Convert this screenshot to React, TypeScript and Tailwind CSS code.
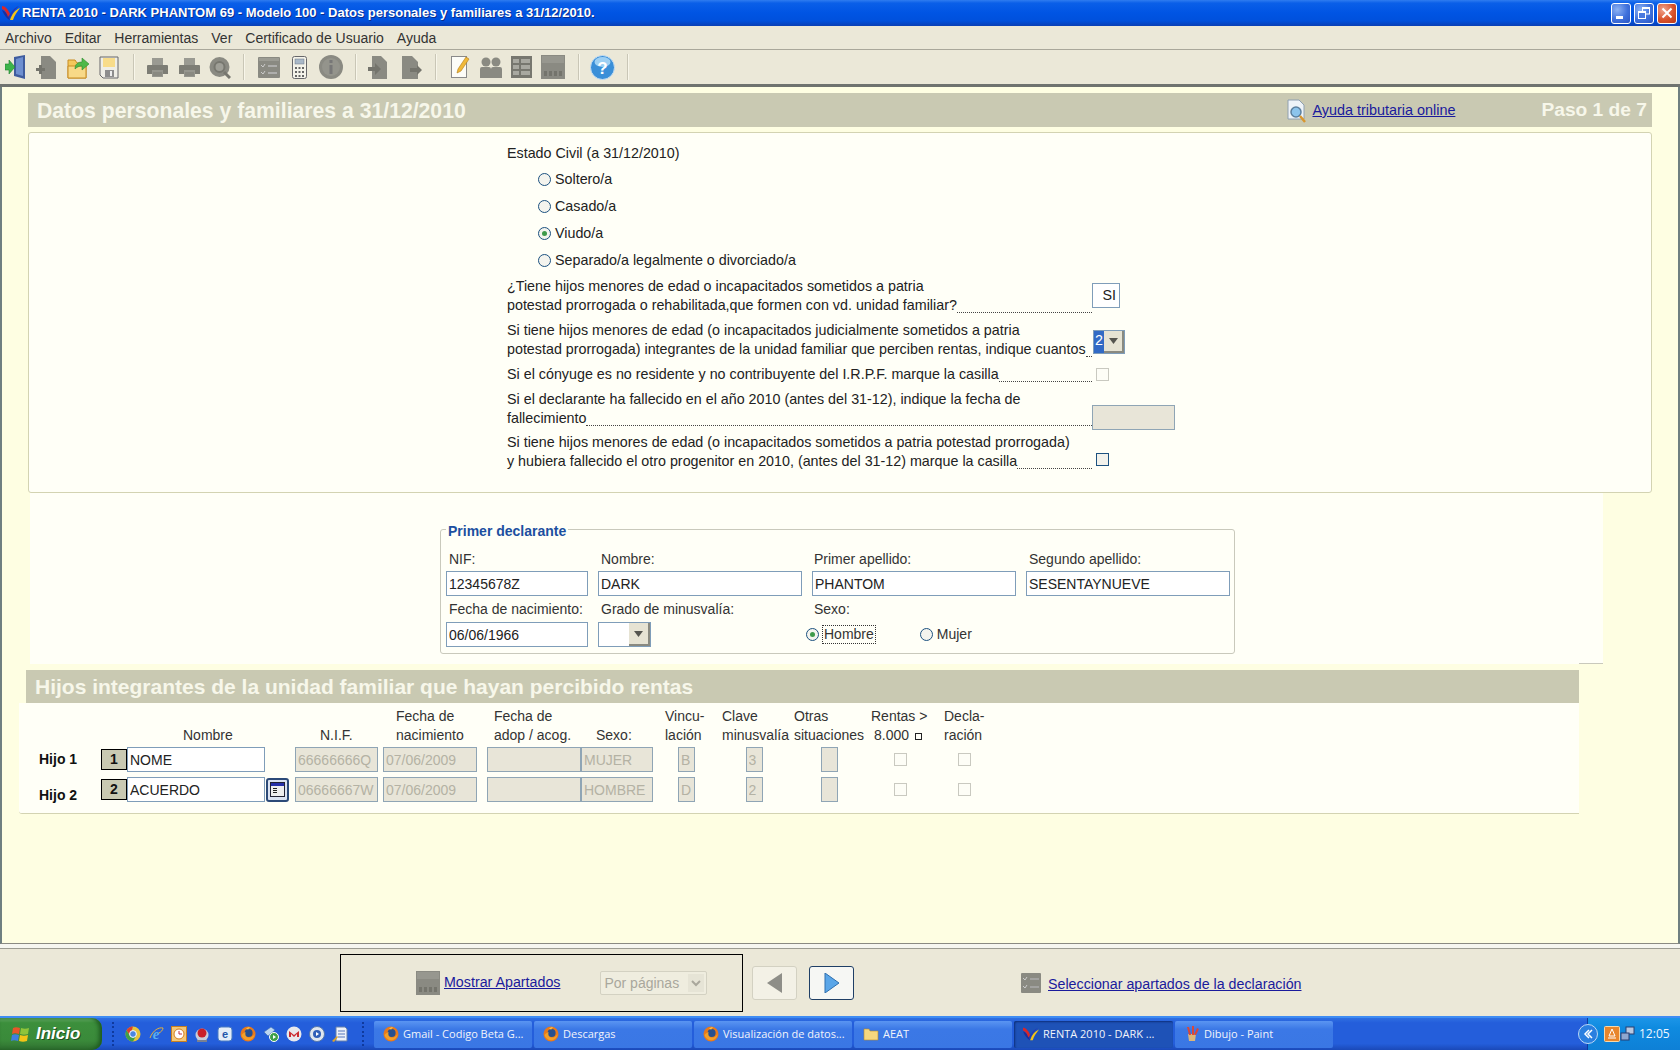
import React from "react";

const G = "#8a8a82";
const CHILD_COLS = "grid grid-cols-[62px_26px_138px_30px_88px_104px_94px_72px_67px_68px_82px_60px_68px]";

function Radio({ checked = false }: { checked?: boolean }) {
  return (
    <span className="-mt-[1px] flex h-[13px] w-[13px] shrink-0 items-center justify-center rounded-full border border-[#1c5180] bg-[#f4f4ee]">
      {checked && <span className="h-[5px] w-[5px] rounded-full bg-[#3f9a4a]" />}
    </span>
  );
}

function Leader() {
  return <span className="mb-[2px] h-[1px] min-w-0 flex-1 self-end border-b border-dotted border-[#444]" />;
}

function Arrow() {
  return (
    <span className="flex h-full w-[21px] items-center justify-center border-b-2 border-r-2 border-[#8a8a80] bg-[#e6e3d3]">
      <svg width="9" height="6" viewBox="0 0 9 6"><path d="M0 0h9L4.5 6z" fill="#55554f" /></svg>
    </span>
  );
}

function TextInput({ value, className }: { value: string; className: string }) {
  return (
    <input
      readOnly
      value={value}
      className={`h-[25px] border border-[#7f9db9] bg-white px-[2px] text-[14px] text-[#222] outline-none ${className}`}
    />
  );
}

function Disabled({ value = "", className }: { value?: string; className: string }) {
  return (
    <input
      readOnly
      value={value}
      className={`h-[25px] border border-[#8fa5b5] bg-[#e8e5d8] px-[2px] text-[14px] text-[#b4b2a4] outline-none ${className}`}
    />
  );
}

function DisabledCheck() {
  return <span className="block h-[13px] w-[13px] border border-[#c9c9c0] bg-[#fdfdf6]" />;
}

function Sep({ className }: { className: string }) {
  return <span className={`h-[26px] w-[2px] shrink-0 border-l border-r border-l-[#c9c6b6] border-r-[#f8f6ea] ${className}`} />;
}

function Firefox() {
  return (
    <svg width="16" height="16" viewBox="0 0 16 16" className="shrink-0">
      <circle cx="8" cy="8" r="7.5" fill="#e8791c" />
      <circle cx="8.6" cy="7" r="4" fill="#27508f" />
      <path d="M1.5 9c1 4 5 6 8.500 5 3-1 4.500-3.500 4.500-6-1.500 3-4.500 4-6.500 3.500C5.500 11 5 9 5.500 6 4 6.500 2.500 7.500 1.500 9z" fill="#f2a02a" />
      <path d="M6 3c1-1.500 3-2 4-1.500-1 .5-1.500 1-1.500 2z" fill="#f6c14a" />
    </svg>
  );
}

function AeatLogo({ size = 18 }: { size?: number }) {
  return (
    <svg width={size} height={size} viewBox="0 0 18 18" className="shrink-0">
      <path d="M0 6c3 1 6 4 8 10C5 15 2 11 0 6z" fill="#1d2f9c" />
      <path d="M0 2c3 0 6 3 8 8l-2 3C5 9 3 6 0 5z" fill="#d9262a" />
      <path d="M8 16c2-6 5-10 10-12-3 4-6 8-7 12z" fill="#f3c417" />
      <path d="M6.500 14C9 8 12 4 17 2c-4 3-7 7-9 12z" fill="#2336b5" />
    </svg>
  );
}

function TaskButton({ icon, label, className }: { icon: React.ReactNode; label: string; className: string }) {
  return (
    <div className={`flex h-[27px] shrink-0 items-center gap-[4px] rounded-[2px] pl-[9px] text-[11px] text-[#f2f4fb] ${className}`}>
      {icon}
      <span className="whitespace-nowrap">{label}</span>
    </div>
  );
}

function WinButton({ kind }: { kind: "min" | "max" | "close" }) {
  const bg =
    kind === "close"
      ? "bg-[radial-gradient(circle_at_30%_30%,#f0a58e,#d9532c_55%,#b83a18)]"
      : "bg-[radial-gradient(circle_at_30%_30%,#8db2f3,#3f71dc_55%,#2a55c4)]";
  return (
    <div className={`flex h-[21px] w-[20px] items-center justify-center rounded-[3px] border border-white ${bg}`}>
      <svg width="14" height="14" viewBox="0 0 14 14">
        {kind === "min" && <rect x="2" y="10" width="7" height="3" fill="#fff" />}
        {kind === "max" && (
          <g fill="none" stroke="#fff">
            <rect x="5.500" y="1.500" width="7" height="6.500" />
            <rect x="1.500" y="5.500" width="7" height="7" fill="#4a79df" />
            <path d="M5.500 2.500h7M1.500 6.500h7" />
          </g>
        )}
        {kind === "close" && <path d="M2.500 2.500l9 9M11.500 2.500l-9 9" stroke="#fff" strokeWidth="2" />}
      </svg>
    </div>
  );
}

function TitleBar() {
  return (
    <div className="flex h-[26px] shrink-0 items-center bg-[linear-gradient(180deg,#2f7cf0_0%,#0a5fe8_12%,#0054e3_50%,#0050dc_80%,#0a3fb4_100%)] pl-[2px] pr-[3px]">
      <AeatLogo size={18} />
      <span className="ml-[2px] flex-1 whitespace-nowrap font-['Liberation_Sans'] text-[13px] font-bold text-white [text-shadow:1px_1px_#0a2d8c]">
        RENTA 2010 - DARK PHANTOM 69 - Modelo 100 - Datos personales y familiares a 31/12/2010.
      </span>
      <div className="flex gap-[3px]">
        <WinButton kind="min" />
        <WinButton kind="max" />
        <WinButton kind="close" />
      </div>
    </div>
  );
}

function MenuBar() {
  return (
    <div className="flex h-[24px] shrink-0 items-center gap-[13px] border-b border-[#a9a79a] bg-[#ebe8d8] pl-[5px] pt-[1px] text-[14px] text-[#333]">
      <span>Archivo</span>
      <span>Editar</span>
      <span>Herramientas</span>
      <span>Ver</span>
      <span>Certificado de Usuario</span>
      <span>Ayuda</span>
    </div>
  );
}

function PrinterIcon({ className }: { className: string }) {
  return (
    <svg width="21" height="23" viewBox="0 0 21 23" className={`shrink-0 ${className}`}>
      <path d="M5 2h11v7H5z" fill="#9a9a92" />
      <path d="M1 9h19q1 0 1 1v8H0v-8q0-1 1-1z" fill="#7d7d75" />
      <path d="M5 14h11v7H5z" fill="#96968e" />
      <path d="M6 17h9M6 19h9" stroke="#7d7d75" />
    </svg>
  );
}

function Toolbar() {
  return (
    <div className="flex h-[37px] shrink-0 items-center border-b-[3px] border-[#6f736f] bg-[#ebe8d8] pl-[5px]">
      <svg width="22" height="24" viewBox="0 0 22 24" className="shrink-0">
        <path d="M9 2l11-2v24l-11-3z" fill="#3f5c9e" />
        <path d="M11 4l7-2v19l-7-2z" fill="#6e8fd0" />
        <path d="M0 9h4V5l6 7-6 7v-4H0z" fill="#3cb44a" stroke="#1f7f2c" strokeWidth=".6" />
      </svg>
      <svg width="20" height="23" viewBox="0 0 20 23" className="ml-[9px] shrink-0">
        <path d="M5 0h9l6 6v17H5z" fill={G} />
        <path d="M3 9h3v3h3v3H6v3H3v-3H0v-3h3z" fill="#74746c" />
      </svg>
      <svg width="23" height="23" viewBox="0 0 23 23" className="ml-[11px] shrink-0">
        <path d="M1 4h7l2 3h9v15H1z" fill="#f3c85c" stroke="#c88c22" />
        <path d="M1 10h18v12H1z" fill="#f8d987" stroke="#c88c22" />
        <path d="M8 13C8 8 11 6 15 6V2l7 6-7 6v-4c-3 0-5 1-7 3z" fill="#4fb848" stroke="#2a8a2e" strokeWidth=".6" />
      </svg>
      <svg width="20" height="23" viewBox="0 0 20 23" className="ml-[9px] shrink-0">
        <path d="M1 1h18v21H4l-3-3z" fill="#efeee6" stroke="#67676a" />
        <rect x="4" y="2" width="12" height="9" fill="#f8dc8a" />
        <rect x="6" y="14" width="9" height="7" fill="#8d8d8d" />
        <rect x="11" y="15" width="2" height="5" fill="#eee" />
      </svg>
      <Sep className="ml-[14px]" />
      <PrinterIcon className="ml-[12px]" />
      <PrinterIcon className="ml-[11px]" />
      <svg width="22" height="23" viewBox="0 0 22 23" className="ml-[9px] shrink-0">
        <circle cx="10.500" cy="11" r="10" fill={G} />
        <circle cx="10.500" cy="11" r="5" fill="#9f9f97" stroke="#77776f" strokeWidth="2" />
        <path d="M15 16l6 6" stroke="#77776f" strokeWidth="3" />
      </svg>
      <Sep className="ml-[12px]" />
      <svg width="22" height="23" viewBox="0 0 22 23" className="ml-[13px] shrink-0">
        <rect x="0" y="1" width="22" height="21" rx="1" fill={G} />
        <rect x="1" y="2" width="20" height="3" fill="#9c9c94" />
        <path d="M3 9l2 2 2-3M3 16l2 2 2-3" stroke="#ccc" fill="none" />
        <path d="M10 10h9M10 17h9" stroke="#bbb" strokeWidth="1.500" />
      </svg>
      <svg width="15" height="23" viewBox="0 0 15 23" className="ml-[12px] shrink-0">
        <rect x=".5" y=".5" width="14" height="22" rx="2" fill="#f4f3ea" stroke="#67676a" />
        <rect x="3" y="3" width="9" height="5" fill="#a9b8c8" stroke="#6a7684" strokeWidth=".5" />
        <path d="M3 11h2v2H3zM6.500 11h2v2h-2zM10 11h2v2h-2zM3 15h2v2H3zM6.500 15h2v2h-2zM10 15h2v2h-2zM3 19h2v2H3zM6.500 19h2v2h-2zM10 19h2v2h-2z" fill="#666" />
      </svg>
      <svg width="24" height="24" viewBox="0 0 24 24" className="ml-[12px] shrink-0">
        <circle cx="12" cy="12" r="12" fill={G} />
        <circle cx="12" cy="12" r="9" fill="#94948c" />
        <rect x="10.500" y="10" width="3" height="9" fill="#777" />
        <rect x="10.500" y="5" width="3" height="3" fill="#777" />
      </svg>
      <Sep className="ml-[12px]" />
      <svg width="20" height="23" viewBox="0 0 20 23" className="ml-[11px] shrink-0">
        <path d="M4 0h9l6 6v17H4z" fill={G} />
        <path d="M0 11h7V7l6 6-6 6v-4H0z" fill="#74746c" />
      </svg>
      <svg width="20" height="23" viewBox="0 0 20 23" className="ml-[14px] shrink-0">
        <path d="M0 0h10l6 6v17H0z" fill={G} />
        <path d="M8 12h7V9l5 5-5 5v-3H8z" fill="#74746c" />
      </svg>
      <Sep className="ml-[13px]" />
      <svg width="19" height="24" viewBox="0 0 19 24" className="ml-[14px] shrink-0">
        <rect x=".5" y="1.500" width="15" height="21" fill="#fdfdf8" stroke="#8a8a8a" />
        <path d="M7 14L15 2l3 2-8 12-4 2z" fill="#f0b93a" stroke="#b27a12" strokeWidth=".6" />
      </svg>
      <svg width="22" height="23" viewBox="0 0 22 23" className="ml-[10px] shrink-0">
        <circle cx="6" cy="6" r="4.500" fill={G} />
        <circle cx="16" cy="6" r="4.500" fill={G} />
        <path d="M0 22V13q0-2 2-2h7q2 0 2 2 0-2 2-2h7q2 0 2 2v9z" fill={G} />
      </svg>
      <svg width="21" height="23" viewBox="0 0 21 23" className="ml-[9px] shrink-0">
        <rect width="21" height="22" fill="#77776f" />
        <path d="M2 3h6v4H2zM10 3h9v4h-9zM2 9h6v4H2zM10 9h9v4h-9zM2 15h6v4H2zM10 15h9v4h-9z" fill="#a8a8a0" />
      </svg>
      <svg width="24" height="24" viewBox="0 0 24 24" className="ml-[9px] shrink-0">
        <rect width="24" height="24" fill={G} />
        <rect x="1" y="1" width="22" height="7" fill="#97978f" />
        <path d="M3 16h3v5H3zM8 16h3v5H8zM13 16h3v5h-3zM18 16h3v5h-3z" fill="#74746c" />
      </svg>
      <Sep className="ml-[13px]" />
      <svg width="25" height="25" viewBox="0 0 25 25" className="ml-[10px] shrink-0">
        <circle cx="12.500" cy="12.500" r="12" fill="#3a8fd8" stroke="#c8dff2" />
        <ellipse cx="12.500" cy="7" rx="8" ry="5" fill="#9ed0f3" />
        <text x="12.500" y="19" textAnchor="middle" fontSize="17" fontWeight="700" fontFamily="Liberation Sans" fill="#fff">?</text>
      </svg>
      <Sep className="ml-[12px]" />
    </div>
  );
}

function Question({
  first,
  second,
  control,
  heightClass,
  className,
}: {
  first?: string;
  second: string;
  control: React.ReactNode;
  heightClass: string;
  className: string;
}) {
  return (
    <div className={`flex ${heightClass} ${className}`}>
      <div className="flex w-[585px] shrink-0 flex-col justify-start">
        {first && <div className="whitespace-nowrap">{first}</div>}
        <div className="flex whitespace-nowrap">
          <span>{second}</span>
          <Leader />
        </div>
      </div>
      {control}
    </div>
  );
}

function PersonalPanel() {
  return (
    <section className="ml-[26px] w-[1624px]">
      <div className="flex h-[34px] items-center bg-[#c9c9b2] pr-[5px]">
        <span className="ml-[9px] mt-[2px] text-[21.2px] font-bold text-[#f7f7ea]">Datos personales y familiares a 31/12/2010</span>
        <svg width="20" height="24" viewBox="0 0 20 24" className="ml-auto mt-[1px] shrink-0">
          <path d="M1 1h11l5 5v14H1z" fill="#eef3f8" stroke="#8fa0b0" />
          <circle cx="9" cy="13" r="5" fill="#8cc4ec" stroke="#5b7f9e" strokeWidth="1.500" />
          <path d="M13 17l5 6" stroke="#d8962e" strokeWidth="2.500" />
        </svg>
        <span className="ml-[5px] mt-[1px] text-[14.4px] text-[#1a1a9c] underline">Ayuda tributaria online</span>
        <span className="ml-[86px] text-[19.2px] font-bold text-[#f7f7ea]">Paso 1 de 7</span>
      </div>
      <div className="mt-[5px] h-[361px] rounded-[3px] border border-[#d3d3b2] bg-[#fffff7] pl-[478px] pt-[11px] text-[14.3px] leading-[19px] text-[#222]">
        <div>Estado Civil (a 31/12/2010)</div>
        <div className="mt-[3px] flex flex-col pl-[31px]">
          <div className="flex h-[27px] items-center gap-[4px]"><Radio />Soltero/a</div>
          <div className="flex h-[27px] items-center gap-[4px]"><Radio />Casado/a</div>
          <div className="flex h-[27px] items-center gap-[4px]"><Radio checked />Viudo/a</div>
          <div className="flex h-[27px] items-center gap-[4px]"><Radio />Separado/a legalmente o divorciado/a</div>
        </div>
        <Question
          className="mt-[3px]"
          heightClass="h-[38px]"
          first="¿Tiene hijos menores de edad o incapacitados sometidos a patria"
          second="potestad prorrogada o rehabilitada,que formen con vd. unidad familiar?"
          control={
            <div className="mt-[6px] flex h-[25px] w-[28px] items-center justify-end border border-[#7f9db9] bg-white pr-[3px]">SI</div>
          }
        />
        <Question
          className="mt-[6px]"
          heightClass="h-[38px]"
          first="Si tiene hijos menores de edad (o incapacitados judicialmente sometidos a patria"
          second="potestad prorrogada) integrantes de la unidad familiar que perciben rentas, indique cuantos"
          control={
            <div className="ml-[1px] mt-[9px] flex h-[24px] w-[32px] border border-[#7f9db9] bg-white">
              <span className="w-[11px] bg-[#316ac5] pl-[1px] text-white">2</span>
              <Arrow />
            </div>
          }
        />
        <Question
          className="mt-[6px]"
          heightClass="h-[19px]"
          second="Si el cónyuge es no residente y no contribuyente del I.R.P.F. marque la casilla"
          control={<div className="ml-[4px] mt-[3px]"><DisabledCheck /></div>}
        />
        <Question
          className="mt-[6px]"
          heightClass="h-[38px]"
          first="Si el declarante ha fallecido en el año 2010 (antes del 31-12), indique la fecha de"
          second="fallecimiento"
          control={<div className="mt-[15px] h-[25px] w-[83px] shrink-0 border border-[#8fa5b5] bg-[#e8e5d8]" />}
        />
        <Question
          className="mt-[5px]"
          heightClass="h-[38px]"
          first="Si tiene hijos menores de edad (o incapacitados sometidos a patria potestad prorrogada)"
          second="y hubiera fallecido el otro progenitor en 2010, (antes del 31-12) marque la casilla"
          control={<div className="ml-[4px] mt-[20px] h-[13px] w-[13px] border border-[#1c5180] bg-[#f2f2ec]" />}
        />
      </div>
    </section>
  );
}

function Declarante() {
  return (
    <section className="ml-[28px] h-[171px] w-[1573px] bg-[#fffff7] pt-[26px] text-[14px] text-[#333]">
      <fieldset className="ml-[410px] h-[135px] w-[795px] rounded-[3px] border border-[#c9c9bc] pl-[5px]">
        <legend className="px-[2px] pt-[4px] font-bold leading-[17px] text-[#1c4fa0]">Primer declarante</legend>
        <div className="mt-[8px] grid grid-cols-[142px_204px_204px_204px] gap-x-[10px]">
          <div className="flex h-[23px] items-center pl-[3px]">NIF:</div>
          <div className="flex h-[23px] items-center pl-[3px]">Nombre:</div>
          <div className="flex h-[23px] items-center pl-[2px]">Primer apellido:</div>
          <div className="flex h-[23px] items-center pl-[3px]">Segundo apellido:</div>
          <TextInput value="12345678Z" className="w-full" />
          <TextInput value="DARK" className="w-full" />
          <TextInput value="PHANTOM" className="w-full" />
          <TextInput value="SESENTAYNUEVE" className="w-full" />
          <div className="flex h-[26px] items-center whitespace-nowrap pl-[3px]">Fecha de nacimiento:</div>
          <div className="flex h-[26px] items-center pl-[3px]">Grado de minusvalía:</div>
          <div className="col-span-2 flex h-[26px] items-center pl-[2px]">Sexo:</div>
          <TextInput value="06/06/1966" className="w-full" />
          <div className="flex h-[25px] w-[53px] border border-[#7f9db9] bg-white">
            <span className="flex-1" />
            <Arrow />
          </div>
          <div className="col-span-2 -ml-[6px] flex h-[25px] items-center">
            <Radio checked />
            <span className="ml-[3px] flex h-[19px] items-center border border-dotted border-[#333] px-[1px]">Hombre</span>
            <span className="ml-[44px]"><Radio /></span>
            <span className="ml-[4px]">Mujer</span>
          </div>
        </div>
      </fieldset>
      <div className="ml-[1549px] mt-[9px] h-[1px] w-[24px] bg-[#c9c9bc]" />
    </section>
  );
}

function ChildRow({
  label,
  labelClass,
  n,
  name,
  nif,
  sex,
  vinc,
  clave,
  active,
}: {
  label: string;
  labelClass: string;
  n: string;
  name: string;
  nif: string;
  sex: string;
  vinc: string;
  clave: string;
  active?: boolean;
}) {
  return (
    <>
      <div className={`font-bold text-[#111] ${labelClass}`}>{label}</div>
      <div className="flex h-[21px] items-center justify-center self-center border border-black bg-[#c9c9b2] font-bold text-[#111]">{n}</div>
      <TextInput value={name} className="w-[138px]" />
      <div className="flex h-[25px] items-center pl-[1px]">
        {active && (
          <span className="flex h-[24px] w-[23px] items-center justify-center rounded-[3px] border-2 border-[#2c4a78] bg-[#dbe3f2]">
            <svg width="15" height="15" viewBox="0 0 15 15">
              <rect x=".5" y=".5" width="14" height="14" fill="#eee" stroke="#223" />
              <rect x="1" y="1" width="13" height="3" fill="#2630a8" />
              <path d="M3 6h4v1H3zM3 8h4v1H3zM3 10h4v1H3z" fill="#222" />
            </svg>
          </span>
        )}
      </div>
      <div><Disabled value={nif} className="w-[83px]" /></div>
      <div><Disabled value="07/06/2009" className="w-[94px]" /></div>
      <Disabled className="w-[94px]" />
      <Disabled value={sex} className="w-[72px]" />
      <div className="flex justify-center"><Disabled value={vinc} className="w-[17px] px-[1px]" /></div>
      <div className="flex justify-center"><Disabled value={clave} className="w-[17px] px-[1px]" /></div>
      <div className="flex justify-center"><Disabled className="w-[17px]" /></div>
      <div className="flex items-center justify-center"><DisabledCheck /></div>
      <div className="flex items-center justify-center"><DisabledCheck /></div>
    </>
  );
}

function Children() {
  return (
    <section className="mt-[6px] text-[14px] leading-[19px] text-[#333]">
      <div className="ml-[24px] flex h-[33px] w-[1553px] items-center bg-[#c9c9b2] pl-[9px] text-[21px] font-bold text-[#f7f7ea]">
        Hijos integrantes de la unidad familiar que hayan percibido rentas
      </div>
      <div className="ml-[17px] h-[111px] w-[1560px] rounded-bl-[3px] border-b border-[#d3d3b2] bg-[#fffff7] pl-[20px] pt-[4px]">
        <div className={CHILD_COLS}>
          <div className="col-span-2" />
          <div className="self-end pl-[56px]">Nombre</div>
          <div />
          <div className="self-end pl-[25px]">N.I.F.</div>
          <div className="pl-[13px]">Fecha de<br />nacimiento</div>
          <div className="pl-[7px]">Fecha de<br />adop / acog.</div>
          <div className="self-end pl-[15px]">Sexo:</div>
          <div className="pl-[12px]">Vincu-<br />lación</div>
          <div className="pl-[2px]">Clave<br />minusvalía</div>
          <div className="pl-[6px]">Otras<br />situaciones</div>
          <div className="pl-[1px]">
            Rentas &gt;
            <br />
            <span className="ml-[3px]">8.000</span>
            <span className="ml-[6px] inline-block h-[7px] w-[7px] border border-[#222]" />
          </div>
          <div className="pl-[14px]">Decla-<br />ración</div>
        </div>
        <div className={`${CHILD_COLS} mt-[2px] gap-y-[5px]`}>
          <ChildRow label="Hijo 1" labelClass="self-center" n="1" name="NOME" nif="66666666Q" sex="MUJER" vinc="B" clave="3" />
          <ChildRow label="Hijo 2" labelClass="self-end -mb-[3px]" n="2" name="ACUERDO" nif="06666667W" sex="HOMBRE" vinc="D" clave="2" active />
        </div>
      </div>
    </section>
  );
}

function BottomBar() {
  return (
    <div className="flex h-[67px] shrink-0 items-start bg-[#ebe8d8] pl-[340px] pt-[5px] text-[14.25px]">
      <div className="flex h-[58px] w-[403px] shrink-0 items-center border border-black pl-[75px]">
        <svg width="24" height="24" viewBox="0 0 24 24" className="shrink-0">
          <rect width="24" height="24" fill={G} />
          <rect x="1" y="1" width="22" height="7" fill="#97978f" />
          <path d="M3 16h3v5H3zM8 16h3v5H8zM13 16h3v5h-3zM18 16h3v5h-3z" fill="#74746c" />
        </svg>
        <span className="ml-[4px] text-[#1a1a9c] underline">Mostrar Apartados</span>
        <div className="ml-[40px] flex h-[24px] w-[107px] items-center justify-between rounded-[2px] border border-[#d3d1c2] bg-[#efeddf] pl-[3px] pr-[2px] text-[14px] text-[#a9a79c]">
          <span>Por páginas</span>
          <svg width="16" height="18" viewBox="0 0 16 18"><rect width="16" height="18" fill="#e6e4d6" /><path d="M4 7l4 4 4-4" fill="none" stroke="#a9a79c" strokeWidth="2" /></svg>
        </div>
      </div>
      <div className="ml-[9px] mt-[12px] flex h-[34px] w-[45px] shrink-0 items-center justify-center rounded-[3px] border border-[#d3d1c2] bg-[#f3f1e6]">
        <svg width="16" height="20" viewBox="0 0 16 20"><path d="M15 0v20L0 10z" fill="#8e8e88" /></svg>
      </div>
      <div className="ml-[12px] mt-[12px] flex h-[34px] w-[45px] shrink-0 items-center justify-center rounded-[3px] border border-[#1f3f66] bg-[#f6f7f4]">
        <svg width="16" height="20" viewBox="0 0 16 20"><path d="M1 0v20l14-10z" fill="#5aa6e8" stroke="#2f6fae" /></svg>
      </div>
      <svg width="20" height="20" viewBox="0 0 20 20" className="ml-[167px] mt-[19px] shrink-0">
        <rect width="20" height="20" rx="1" fill={G} />
        <path d="M2 5l2 2 2-3M2 13l2 2 2-3" stroke="#ccc" fill="none" />
        <path d="M9 6h9M9 14h9" stroke="#aaa" strokeWidth="1.500" />
      </svg>
      <span className="ml-[7px] mt-[20px] whitespace-nowrap text-[#1a1a9c] underline">Seleccionar apartados de la declaración</span>
    </div>
  );
}

function QuickIcons() {
  return (
    <div className="ml-[11px] flex items-center gap-[7px]">
      <svg width="16" height="16" viewBox="0 0 16 16"><circle cx="8" cy="8" r="7.500" fill="#e6c33a" /><path d="M8 .5A7.500 7.500 0 0 0 1.500 4.300L5 10z" fill="#d9412f" /><path d="M1.500 4.300A7.500 7.500 0 0 0 8 15.500L11 10H5z" fill="#3e9f4a" /><circle cx="8" cy="8" r="3.400" fill="#4a86e0" stroke="#fff" /></svg>
      <svg width="16" height="16" viewBox="0 0 16 16"><text x="8" y="13" textAnchor="middle" fontSize="15" fontStyle="italic" fontWeight="700" fontFamily="Liberation Serif" fill="#5ab0ee">e</text><path d="M2 12C5 4 11 1 15 2c0 2-2 4-4 5" fill="none" stroke="#e6b23a" /></svg>
      <svg width="16" height="16" viewBox="0 0 16 16"><rect x=".5" y=".5" width="15" height="15" fill="#f2c777" stroke="#c77f22" /><circle cx="8" cy="8" r="5" fill="#fff" stroke="#d27d20" /><path d="M8 5v3h3" fill="none" stroke="#b34" /></svg>
      <svg width="16" height="16" viewBox="0 0 16 16"><circle cx="8" cy="9" r="6.500" fill="#c9cdd8" /><circle cx="8" cy="7" r="4.500" fill="#c8202a" /><path d="M3 14h10v2H3z" fill="#7a8090" /></svg>
      <svg width="16" height="16" viewBox="0 0 16 16"><rect x="1" y="1" width="14" height="14" rx="3" fill="#e4edf8" stroke="#4a7ac0" /><text x="8" y="12" textAnchor="middle" fontSize="11" fontWeight="700" fontFamily="Liberation Sans" fill="#2255aa">e</text></svg>
      <Firefox />
      <svg width="16" height="16" viewBox="0 0 16 16"><path d="M1 6l7-5 4 3-7 6z" fill="#bcd6f2" stroke="#3a6cb0" strokeWidth=".6" /><circle cx="11" cy="11" r="4.500" fill="#3e9f4a" stroke="#fff" /><path d="M10 9l3 2-3 2z" fill="#fff" /></svg>
      <svg width="16" height="16" viewBox="0 0 16 16"><circle cx="8" cy="8" r="7.500" fill="#e9e9ec" /><path d="M3 11V5l5 4 5-4v6h-2V8L8 11 5 8v3z" fill="#cc2c30" /></svg>
      <svg width="16" height="16" viewBox="0 0 16 16"><circle cx="8" cy="8" r="7.500" fill="#dfe6ef" stroke="#5577aa" /><circle cx="8" cy="8" r="4" fill="#2f5fb8" /><path d="M7 6l3 2-3 2z" fill="#fff" /></svg>
      <svg width="16" height="16" viewBox="0 0 16 16"><path d="M4 1h9l2 2v12H4z" fill="#eef2fa" stroke="#6680aa" /><path d="M6 5h7M6 8h7M6 11h7" stroke="#5577bb" /><path d="M0 15l5-5 1 1-4 5z" fill="#d9a22e" /></svg>
    </div>
  );
}

function Grip({ className }: { className: string }) {
  return (
    <span className={`flex h-[24px] shrink-0 flex-col justify-between ${className}`}>
      <span className="h-[2px] w-[2px] bg-[#0f3a9e]" />
      <span className="h-[2px] w-[2px] bg-[#0f3a9e]" />
      <span className="h-[2px] w-[2px] bg-[#0f3a9e]" />
      <span className="h-[2px] w-[2px] bg-[#0f3a9e]" />
      <span className="h-[2px] w-[2px] bg-[#0f3a9e]" />
      <span className="h-[2px] w-[2px] bg-[#0f3a9e]" />
    </span>
  );
}

const taskIdle = "w-[158px] bg-[linear-gradient(180deg,#5a95f2,#3b78e6_30%,#3a77e4)]";

function Taskbar() {
  return (
    <div className="flex h-[34px] shrink-0 items-center border-t-2 border-[#3f8cf3] bg-[linear-gradient(180deg,#2f6fe2_0%,#245edb_15%,#245edb_80%,#1a49b8_100%)] font-['Open_Sans']">
      <div className="flex h-full w-[102px] shrink-0 items-center gap-[5px] rounded-r-[10px] bg-[linear-gradient(180deg,#6cb36c_0%,#3c8f3c_15%,#3a8a3a_70%,#2f6f30_100%)] pl-[10px] shadow-[inset_-3px_0_4px_#1e5a20]">
        <svg width="21" height="21" viewBox="0 0 21 21" className="shrink-0">
          <path d="M3 4c2-1 4-1 7 0l-1 6c-3-1-5-1-7 0z" fill="#e8562a" />
          <path d="M11 4c3 1 5 1 8 0l-1 6c-3 1-5 1-8 0z" fill="#8fc43a" />
          <path d="M2 11c2-1 4-1 7 0l-1 6c-3-1-5-1-7 0z" fill="#3f7fe0" />
          <path d="M10 11c3 1 5 1 8 0l-1 6c-3 1-5 1-8 0z" fill="#f3c417" />
        </svg>
        <span className="font-['Liberation_Sans'] text-[17px] font-bold italic text-white [text-shadow:1px_1px_#1f4f22]">Inicio</span>
      </div>
      <Grip className="ml-[10px]" />
      <QuickIcons />
      <Grip className="ml-[14px]" />
      <div className="ml-[10px] flex gap-[2px]">
        <TaskButton icon={<Firefox />} label="Gmail - Codigo Beta G..." className={taskIdle} />
        <TaskButton icon={<Firefox />} label="Descargas" className={taskIdle} />
        <TaskButton icon={<Firefox />} label="Visualización de datos..." className={taskIdle} />
        <TaskButton
          icon={
            <svg width="16" height="16" viewBox="0 0 16 16" className="shrink-0">
              <path d="M1 3h5l1 2h8v9H1z" fill="#f6d77f" stroke="#b98a2a" strokeWidth=".6" />
            </svg>
          }
          label="AEAT"
          className={taskIdle}
        />
        <TaskButton
          icon={<AeatLogo size={16} />}
          label="RENTA 2010 - DARK ..."
          className="w-[159px] bg-[#1e52b7] shadow-[inset_1px_1px_2px_#0e2f7a]"
        />
        <TaskButton
          icon={
            <svg width="16" height="16" viewBox="0 0 16 16" className="shrink-0">
              <path d="M4 8h8l-1 7H5z" fill="#dbb67a" />
              <path d="M5 9L3 1h2l2 8zM8 9V0h2v9zM10 9l3-7 2 1-3 6z" fill="#d9473a" />
            </svg>
          }
          label="Dibujo - Paint"
          className={taskIdle}
        />
      </div>
      <div className="ml-auto flex h-full w-[93px] shrink-0 items-center border-l border-[#0f3a9e] bg-[linear-gradient(180deg,#1c95e8,#0f8be0_30%,#0e80d6)] text-[12px] text-[#eef6ff]">
        <span className="-ml-[10px] flex h-[20px] w-[20px] shrink-0 items-center justify-center rounded-full border border-[#bcd8f5] bg-[#2a7fe0]">
          <svg width="10" height="10" viewBox="0 0 10 10"><path d="M6 1L2 5l4 4M9 1L5 5l4 4" fill="none" stroke="#fff" strokeWidth="1.500" /></svg>
        </span>
        <svg width="16" height="16" viewBox="0 0 16 16" className="ml-[6px] shrink-0">
          <rect x=".5" y=".5" width="15" height="15" rx="1" fill="#e8862c" stroke="#f8d8a8" />
          <path d="M4 12h8M8 3L5 10h6z" stroke="#fff" fill="none" />
        </svg>
        <svg width="16" height="16" viewBox="0 0 16 16" className="shrink-0">
          <rect x="6" y="1" width="8" height="7" fill="#b9c8e0" stroke="#2a3f70" />
          <rect x="1" y="7" width="8" height="7" fill="#8fa8d0" stroke="#2a3f70" />
        </svg>
        <span className="ml-[3px]">12:05</span>
      </div>
    </div>
  );
}

export default function App() {
  return (
    <div className="relative flex h-[1050px] w-[1680px] flex-col overflow-hidden bg-[#ebe8d8] font-['Liberation_Sans',Arial,sans-serif]">
      <TitleBar />
      <MenuBar />
      <Toolbar />
      <main className="h-[857px] shrink-0 border-x-[2px] border-b border-x-[#6f7f80] border-b-[#8a8a82] bg-[#fefee2] pt-[6px]">
        <PersonalPanel />
        <Declarante />
        <Children />
      </main>
      <div className="h-[5px] shrink-0 border-b border-[#9c9c92] bg-[#f6f6f0]" />
      <BottomBar />
      <Taskbar />
    </div>
  );
}
